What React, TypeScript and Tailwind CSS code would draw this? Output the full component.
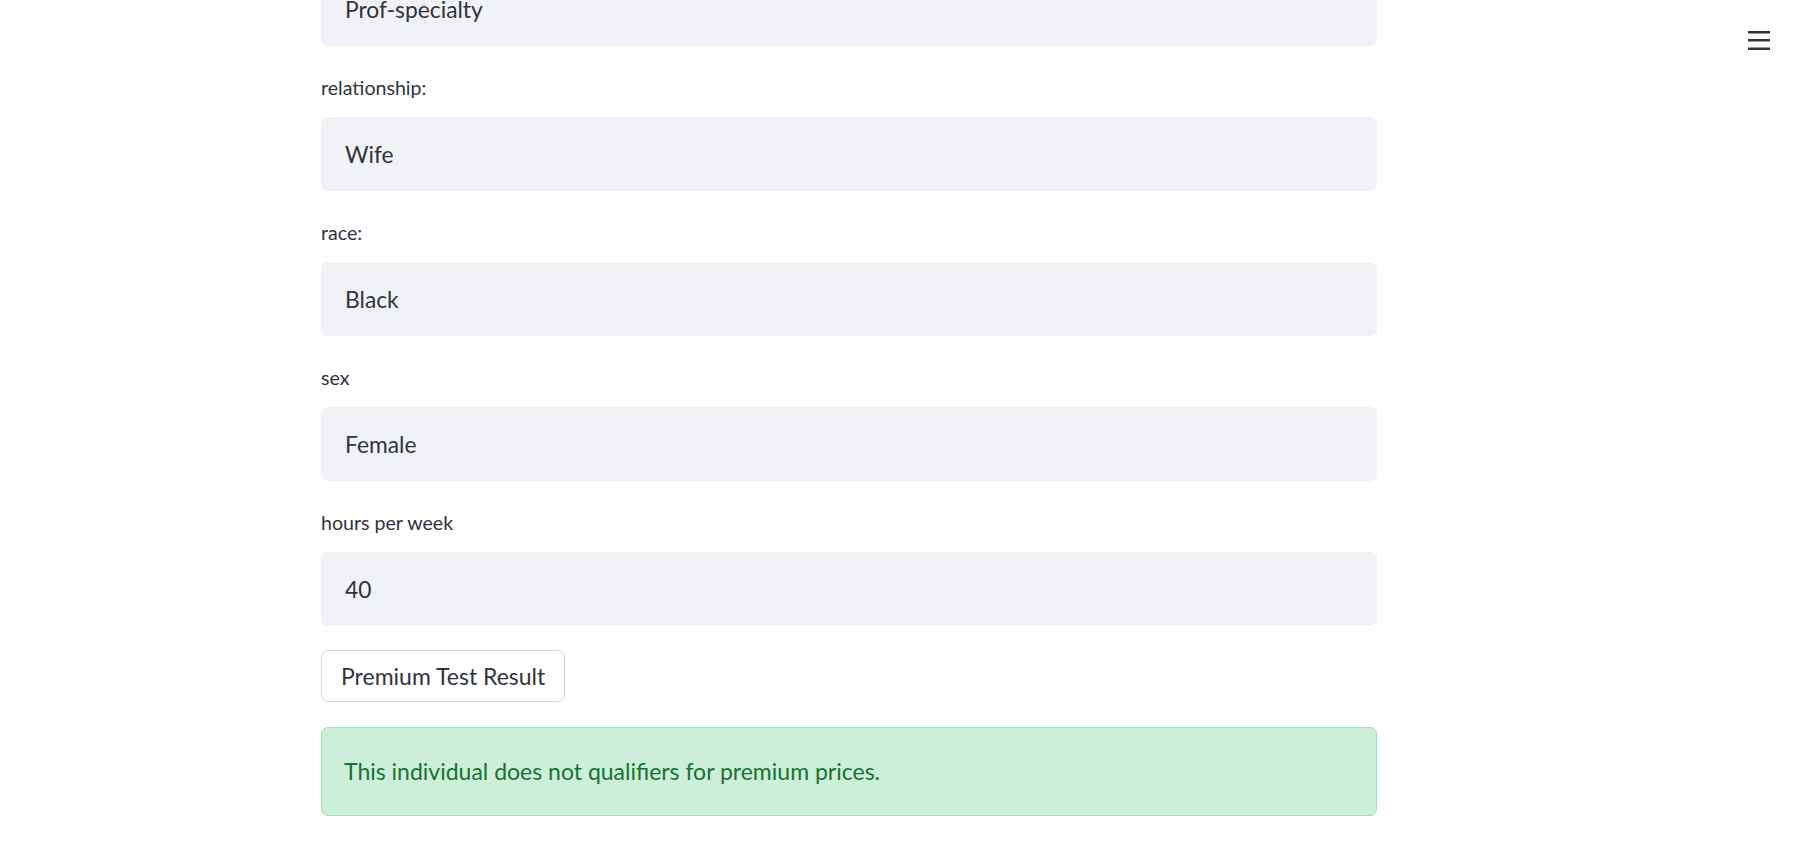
const fields = [
  { label: 'relationship:', value: 'Wife' },
  { label: 'race:', value: 'Black' },
  { label: 'sex', value: 'Female' },
  { label: 'hours per week', value: '40' },
]

function Field({ label, value }: { label: string; value: string }) {
  return (
    <div>
      <div className="mt-[24px] mb-[11px] flex h-[36px] items-center text-[19.6px] text-[#31333f]">
        {label}
      </div>
      <div className="flex h-[74px] items-center rounded-[7px] bg-[#f0f2f6] px-[24px] text-[22.8px] text-[#31333f]">
        {value}
      </div>
    </div>
  )
}

export default function App() {
  return (
    <div className="relative h-[861px] w-full overflow-hidden bg-white font-['Lato',sans-serif]">
      <button className="absolute right-[33px] top-[30px] text-[#31333f]">
        <svg width="22" height="20" viewBox="0 0 22 20" fill="currentColor">
          <rect x="0" y="1" width="22" height="2.5" />
          <rect x="0" y="9" width="22" height="2.5" />
          <rect x="0" y="17.5" width="22" height="2.5" />
        </svg>
      </button>

      <div className="ml-[321px] w-[1056px] -mt-[28px]">
        <div className="flex h-[74px] items-center rounded-[7px] bg-[#f0f2f6] px-[24px] text-[22.8px] text-[#31333f]">
          Prof-specialty
        </div>

        {fields.map((f) => (
          <Field key={f.label} label={f.label} value={f.value} />
        ))}

        <button className="mt-[24px] h-[52px] rounded-[7px] border border-[#d5d6da] bg-white px-[19px] text-[23px] text-[#31333f]">
          Premium Test Result
        </button>

        <div className="mt-[25px] flex h-[89px] items-center rounded-[7px] border border-[#a3dfb5] bg-[#cdeed8] px-[22px] text-[23px] text-[#177233]">
          This individual does not qualifiers for premium prices.
        </div>
      </div>
    </div>
  )
}
